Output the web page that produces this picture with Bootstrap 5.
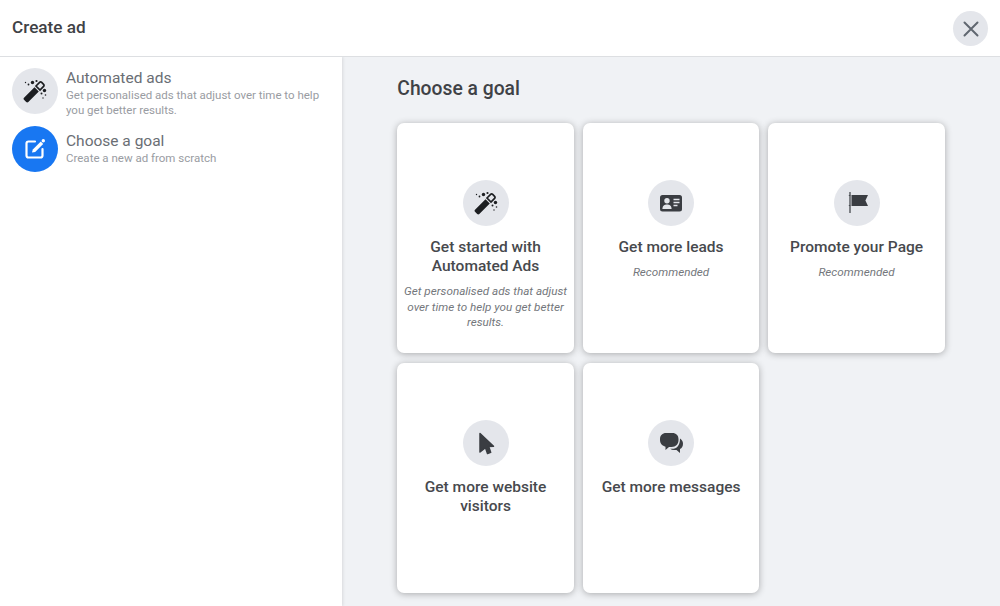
<!DOCTYPE html>
<html lang="en">
<head>
<meta charset="utf-8">
<title>Create ad</title>
<link href="https://cdn.jsdelivr.net/npm/bootstrap@5.3.0/dist/css/bootstrap.min.css" rel="stylesheet">
<style>
html,body{height:606px;overflow:hidden}
body{font-family:Roboto,"Liberation Sans",sans-serif;background:#fff;color:#444950}
.topbar{height:57px;border-bottom:1px solid #dddfe2;padding:0 12px;background:#fff;position:relative;z-index:2}
.topbar h1{font-size:17.2px;font-weight:500;margin:0;color:#3f4246;line-height:20px;position:relative;top:-1px}
.closer{width:35px;height:35px;border-radius:50%;background:#e4e6eb;border:0;padding:0;margin-top:1px}
.shell{height:549px}
.side{width:342px;flex:none;background:#fff;box-shadow:1px 0 3px rgba(0,0,0,.1);padding:11px 12px 0;z-index:1}
.sideitem{min-height:58px}
.disc{width:46px;height:46px;border-radius:50%;background:#e4e6eb;flex:none}
.disc.on{background:#1877f2}
.sidename{font-size:15.5px;line-height:18px;color:#6a6e74}
.sidesub{font-size:11.5px;line-height:15px;color:#999ca2;margin-top:1px}
.sidefirst{padding-top:1px}
.sidesecond{padding-top:6px}
.stage{background:#f0f2f5;padding:20px 0 0 55.3px}
.stage h2{font-size:19.3px;font-weight:500;line-height:23px;color:#3f4246;margin:0 0 23px}
.goals{display:grid;grid-template-columns:repeat(3,176.5px);grid-auto-rows:230px;column-gap:9px;row-gap:10px}
.goal{background:#fff;border-radius:7px;box-shadow:0 1px 7px rgba(0,0,0,.3);padding:57px 5px 0;text-align:center}
.goal .disc{margin:0 auto 12px}
.goalname{font-size:15.5px;font-weight:500;line-height:19px;color:#47494d}
.goalnote{font-size:11.7px;font-style:italic;line-height:15.5px;color:#74777c;margin-top:8px}
svg{display:block}
</style>
</head>
<body>
<header class="topbar d-flex align-items-center justify-content-between">
  <h1>Create ad</h1>
  <button class="closer d-flex align-items-center justify-content-center" aria-label="Close">
    <svg width="18" height="18" viewBox="0 0 18 18"><path d="M2.500 2.500l13 13M15.500 2.500l-13 13" stroke="#606770" stroke-width="2" stroke-linecap="round"/></svg>
  </button>
</header>
<div class="shell d-flex">
  <aside class="side">
    <div class="sideitem d-flex gap-2">
      <div class="disc d-flex align-items-center justify-content-center"><svg width="26" height="26" viewBox="0 0 26 26"><use href="#wand"/></svg></div>
      <div class="sidefirst">
        <div class="sidename">Automated ads</div>
        <div class="sidesub">Get personalised ads that adjust over time to help you get better results.</div>
      </div>
    </div>
    <div class="sideitem d-flex gap-2">
      <div class="disc on d-flex align-items-center justify-content-center">
        <svg width="26" height="26" viewBox="0 0 26 26"><path d="M13 5.500H6.500a2 2 0 0 0-2 2v12a2 2 0 0 0 2 2h12a2 2 0 0 0 2-2V13" fill="none" stroke="#fff" stroke-width="2.200" stroke-linecap="round"/><path d="M10 16.500l.8-3 8-8 2.400 2.400-8 8z" fill="#fff"/><circle cx="21.300" cy="4.800" r="1.700" fill="#fff"/></svg>
      </div>
      <div class="sidesecond">
        <div class="sidename">Choose a goal</div>
        <div class="sidesub">Create a new ad from scratch</div>
      </div>
    </div>
  </aside>
  <main class="stage flex-grow-1">
    <h2>Choose a goal</h2>
    <div class="goals">
      <div class="goal">
        <div class="disc d-flex align-items-center justify-content-center"><svg width="26" height="26" viewBox="0 0 26 26"><use href="#wand"/></svg></div>
        <div class="goalname">Get started with<br>Automated Ads</div>
        <div class="goalnote">Get personalised ads that adjust over time to help you get better results.</div>
      </div>
      <div class="goal">
        <div class="disc d-flex align-items-center justify-content-center">
          <svg width="24" height="24" viewBox="0 0 24 24"><rect x="1" y="4" width="22" height="16.500" rx="2.500" fill="#3a3d42"/><circle cx="8" cy="9.800" r="2.700" fill="#e4e6eb"/><path d="M3.400 18c.2-3.300 2-4.400 4.600-4.400s4.400 1.100 4.600 4.400z" fill="#e4e6eb"/><path d="M14.500 8.500h6M14.500 11.500h6M14.500 14.500h4" stroke="#e4e6eb" stroke-width="1.300"/></svg>
        </div>
        <div class="goalname">Get more leads</div>
        <div class="goalnote">Recommended</div>
      </div>
      <div class="goal">
        <div class="disc d-flex align-items-center justify-content-center">
          <svg width="24" height="24" viewBox="0 0 24 24"><path d="M5 1v21" stroke="#3a3d42" stroke-width="1.200"/><path d="M6.500 4H23l-2.600 5.500L23 15H6.500z" fill="#3a3d42"/><path d="M3.800 4.500h1.500M3.800 14.500h1.500" stroke="#3a3d42" stroke-width=".8"/></svg>
        </div>
        <div class="goalname">Promote your Page</div>
        <div class="goalnote">Recommended</div>
      </div>
      <div class="goal">
        <div class="disc d-flex align-items-center justify-content-center">
          <svg width="24" height="24" viewBox="0 0 24 24"><path d="M6 2.500l13.500 12.700-4.800.4 2 5.800-3.200 1.100-2-5.800-5.500 4.300z" fill="#3a3d42" stroke="#3a3d42" stroke-width="1.500" stroke-linejoin="round"/></svg>
        </div>
        <div class="goalname">Get more website<br>visitors</div>
      </div>
      <div class="goal">
        <div class="disc d-flex align-items-center justify-content-center">
          <svg width="26" height="26" viewBox="0 0 26 26"><path d="M8 3h6.500c3.500 0 6 2.500 6 6v1c0 4-2.500 7-7 7H11l-3.500 3v-3.300C4.500 16 2 13.500 2 10V9c0-3.500 2.500-6 6-6z" fill="#3a3d42"/><path d="M22 8.500c1.800 1 3 3 3 5.200 0 2.400-1.100 4.300-3 5.300V23l-3.500-3H16c-1.500 0-2.800-.4-3.800-1.200H14c5 0 8-3.300 8-10.300z" fill="#3a3d42"/></svg>
        </div>
        <div class="goalname">Get more messages</div>
      </div>
    </div>
  </main>
</div>
<svg width="0" height="0" class="position-absolute">
  <symbol id="wand" viewBox="0 0 26 26">
    <path d="M4.200 24l-2.200-2.200c-.6-.6-.6-1.500 0-2.100L12.500 9.200l4.300 4.300L6.300 24c-.6.600-1.500.600-2.100 0z" fill="#1c1e21"/>
    <path d="M14 8l3.600-3.600c.6-.6 1.500-.6 2.100 0l1.900 1.900c.6.6.6 1.500 0 2.100L18 12z" fill="none" stroke="#1c1e21" stroke-width="1.700"/>
    <circle cx="10.500" cy="4.500" r="1.700" fill="#1c1e21"/><circle cx="14.500" cy="3" r="1.100" fill="#1c1e21"/><circle cx="6.500" cy="6.500" r=".9" fill="#1c1e21"/><circle cx="3.500" cy="4.500" r=".7" fill="#1c1e21"/><circle cx="22.500" cy="12.500" r="1.700" fill="#1c1e21"/><circle cx="19.500" cy="15.500" r="1" fill="#1c1e21"/><circle cx="23.500" cy="17" r=".8" fill="#1c1e21"/><circle cx="21" cy="20" r=".7" fill="#1c1e21"/>
  </symbol>
</svg>
</body>
</html>
